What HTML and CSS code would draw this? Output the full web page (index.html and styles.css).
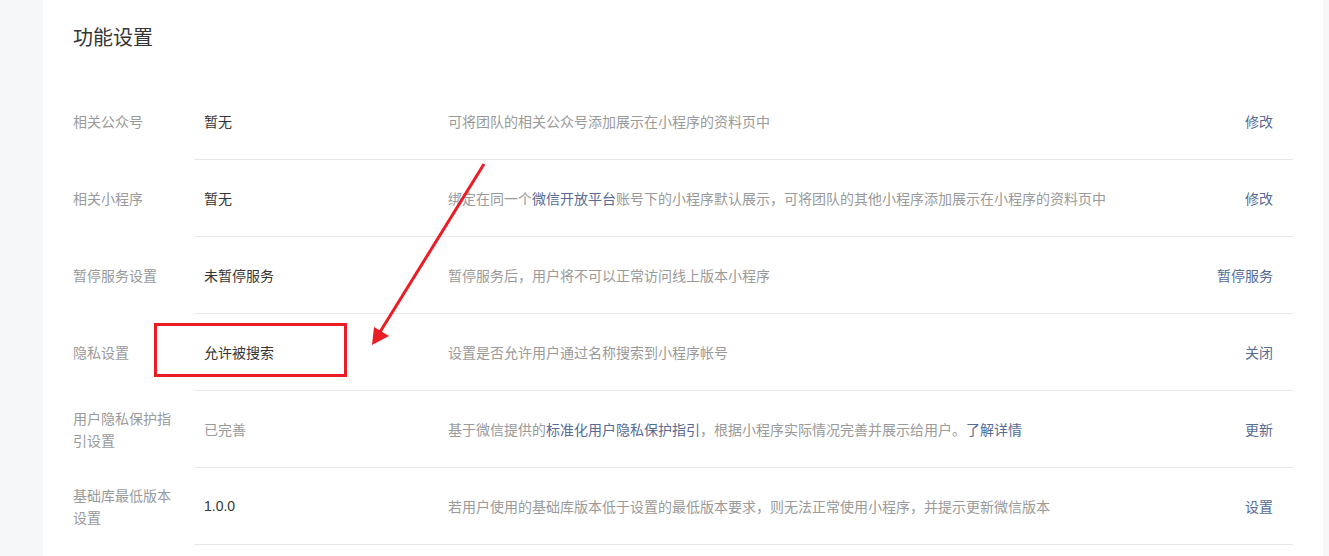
FILE: index.html
```html
<!DOCTYPE html>
<html lang="zh-CN">
<head>
    <meta charset="UTF-8">
    <title>功能设置</title>
    <link rel="stylesheet" href="styles.css">
</head>
<body>
    <div class="page">
        <div class="card">
            <h2 class="card-title">功能设置</h2>

            <div class="setting-list">
                <div class="setting-row">
                    <div class="setting-label">相关公众号</div>
                    <div class="setting-body">
                        <div class="setting-value">暂无</div>
                        <div class="setting-desc">可将团队的相关公众号添加展示在小程序的资料页中</div>
                        <a class="setting-action">修改</a>
                    </div>
                </div>

                <div class="setting-row">
                    <div class="setting-label">相关小程序</div>
                    <div class="setting-body">
                        <div class="setting-value">暂无</div>
                        <div class="setting-desc">绑定在同一个<a class="link">微信开放平台</a>账号下的小程序默认展示，可将团队的其他小程序添加展示在小程序的资料页中</div>
                        <a class="setting-action">修改</a>
                    </div>
                </div>

                <div class="setting-row">
                    <div class="setting-label">暂停服务设置</div>
                    <div class="setting-body">
                        <div class="setting-value">未暂停服务</div>
                        <div class="setting-desc">暂停服务后，用户将不可以正常访问线上版本小程序</div>
                        <a class="setting-action">暂停服务</a>
                    </div>
                </div>

                <div class="setting-row">
                    <div class="setting-label">隐私设置</div>
                    <div class="setting-body">
                        <div class="setting-value">允许被搜索</div>
                        <div class="setting-desc">设置是否允许用户通过名称搜索到小程序帐号</div>
                        <a class="setting-action">关闭</a>
                    </div>
                </div>

                <div class="setting-row">
                    <div class="setting-label">用户隐私保护指引设置</div>
                    <div class="setting-body">
                        <div class="setting-value muted">已完善</div>
                        <div class="setting-desc">基于微信提供的<a class="link">标准化用户隐私保护指引</a>，根据小程序实际情况完善并展示给用户。<a class="link">了解详情</a></div>
                        <a class="setting-action">更新</a>
                    </div>
                </div>

                <div class="setting-row">
                    <div class="setting-label">基础库最低版本设置</div>
                    <div class="setting-body">
                        <div class="setting-value">1.0.0</div>
                        <div class="setting-desc">若用户使用的基础库版本低于设置的最低版本要求，则无法正常使用小程序，并提示更新微信版本</div>
                        <a class="setting-action">设置</a>
                    </div>
                </div>
            </div>
        </div>

        <!-- annotation drawn over the screenshot -->
        <div class="mark-box"></div>
        <svg class="mark-arrow" width="1329" height="556" viewBox="0 0 1329 556">
            <line x1="484" y1="164" x2="380" y2="332" stroke="#ec1c24" stroke-width="3"/>
            <polygon points="372,345 374,327 389,336" fill="#ec1c24"/>
        </svg>
    </div>
</body>
</html>
```

FILE: styles.css
```css
* {
    margin: 0;
    padding: 0;
    box-sizing: border-box;
}

body {
    font-family: "Liberation Sans", "Noto Sans CJK SC", sans-serif;
    font-size: 14px;
    background: #f6f7f9;
    color: #353535;
    overflow: hidden;
}

.page {
    position: relative;
    height: 556px;
    padding: 0 6px 0 43px;
}

.card {
    background: #fff;
    height: 100%;
    padding: 0 30px;
}

.card-title {
    font-size: 20px;
    font-weight: normal;
    line-height: 24px;
    padding-top: 26px;
    margin-bottom: 33px;
    color: #353535;
}

.setting-row {
    display: flex;
}

.setting-label {
    width: 121px;
    flex-shrink: 0;
    padding-right: 16px;
    color: #9a9a9a;
    line-height: 22px;
    display: flex;
    align-items: center;
}

.setting-body {
    flex: 1;
    display: flex;
    align-items: center;
    height: 77px;
    border-bottom: 1px solid #e7e7eb;
    padding: 0 20px 0 10px;
}

.setting-value {
    width: 244px;
    flex-shrink: 0;
    color: #353535;
}

.setting-value.muted {
    color: #9a9a9a;
}

.setting-desc {
    flex: 1;
    color: #9a9a9a;
}

.link {
    color: #576b95;
    text-decoration: none;
}

.setting-action {
    color: #576b95;
    text-decoration: none;
    cursor: pointer;
}

.mark-box {
    position: absolute;
    left: 154px;
    top: 323px;
    width: 193px;
    height: 54px;
    border: 3px solid #ec1c24;
}

.mark-arrow {
    position: absolute;
    left: 0;
    top: 0;
    pointer-events: none;
}
```
